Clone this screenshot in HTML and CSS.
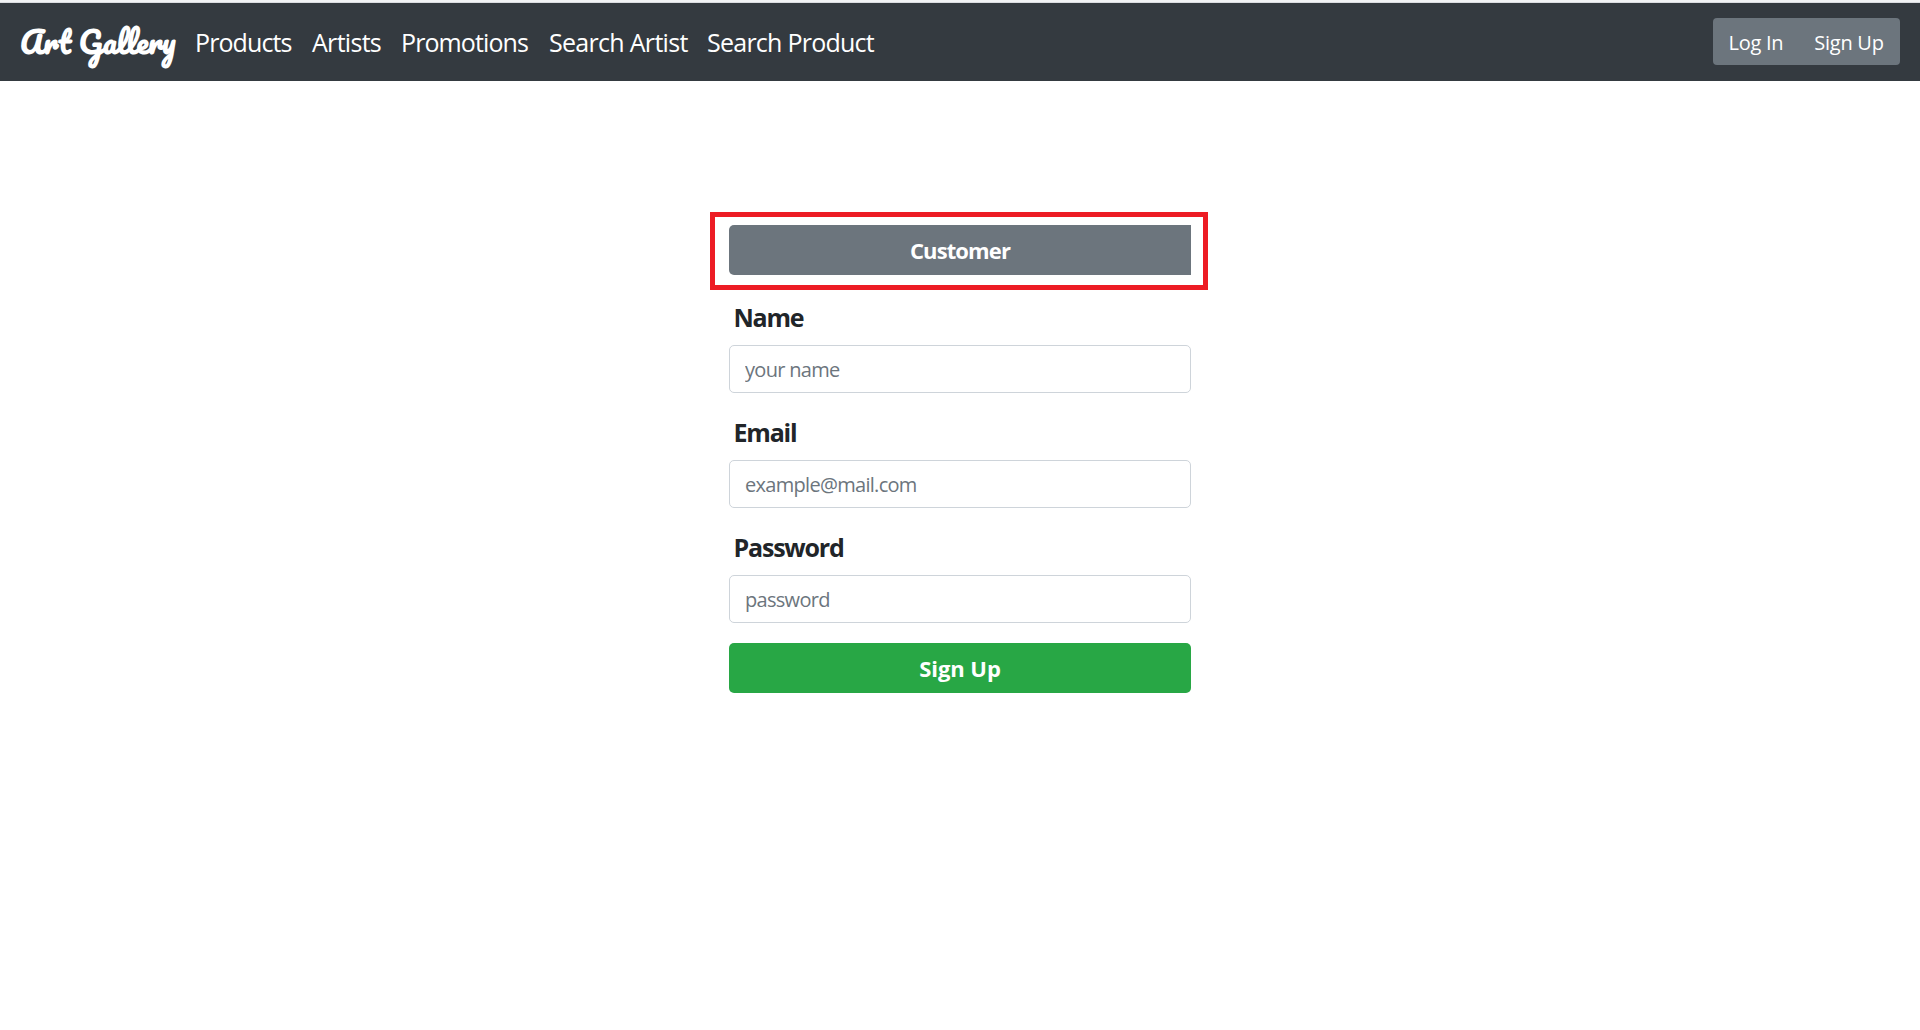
FILE: index.html
```html
<!DOCTYPE html>
<html lang="en">
<head>
<meta charset="utf-8">
<title>Art Gallery</title>
<link rel="stylesheet" href="styles.css">
</head>
<body>
<nav class="navbar">
  <a class="brand">Art Gallery</a>
  <div class="links">
    <a class="link products">Products</a>
    <a class="link artists">Artists</a>
    <a class="link promotions">Promotions</a>
    <a class="link search-artist">Search Artist</a>
    <a class="link search-product">Search Product</a>
  </div>
  <div class="account">
    <button class="account-btn login">Log In</button>
    <button class="account-btn signup">Sign Up</button>
  </div>
</nav>
<main class="page">
  <form class="form">
    <div class="highlight">
      <button type="button" class="btn btn-role">Customer</button>
    </div>
    <div class="group">
      <label class="label" for="name">Name</label>
      <input class="input" id="name" type="text" placeholder="your name">
    </div>
    <div class="group">
      <label class="label" for="email">Email</label>
      <input class="input" id="email" type="email" placeholder="example@mail.com">
    </div>
    <div class="group">
      <label class="label" for="password">Password</label>
      <input class="input" id="password" type="password" placeholder="password">
    </div>
    <button type="button" class="btn btn-submit">Sign Up</button>
  </form>
</main>
</body>
</html>
```
FILE: styles.css
```css
* { box-sizing: border-box; }
body {
  margin: 0;
  background: #fff;
  color: #212529;
  font-family: "Open Sans", "Noto Sans", sans-serif;
  font-size: 20px;
  line-height: 1.5;
}
button, input { font: inherit; }
.navbar {
  display: flex;
  align-items: center;
  height: 81px;
  padding: 3px 20px 0;
  background: linear-gradient(#f1f3f5 2px, #dadce0 2px, #dadce0 3px, #343a40 3px);
  color: #fff;
}
.brand {
  width: 165px;
  font-family: "Pacifico", "Liberation Serif", cursive;
  font-weight: 700;
  font-size: 30px;
  line-height: 44px;
  white-space: nowrap;
}
.links { display: flex; flex: 1; padding: 2px 0 0 10px; }
.link {
  font-size: 25px;
  letter-spacing: -0.9px;
  white-space: nowrap;
}
.products { width: 117px; }
.artists { width: 89px; letter-spacing: -0.7px; }
.promotions { width: 148px; }
.search-artist { width: 158px; letter-spacing: -0.7px; }
.search-product { width: 172px; letter-spacing: -0.75px; }
.account {
  display: flex;
  width: 187px;
  height: 47px;
  margin-bottom: 1px;
  border-radius: 4px;
  background: #6c757d;
}
.account-btn {
  border: 0;
  padding: 2px 0 0;
  background: transparent;
  color: #fff;
  letter-spacing: -0.27px;
}
.login { width: 86px; }
.signup { width: 101px; padding-right: 1px; }
.page { display: flex; justify-content: center; padding: 131px 2px 0 0; }
.form { width: 498px; }
.highlight {
  width: 498px;
  height: 78px;
  margin-bottom: 8px;
  padding: 8px 12px 0 14px;
  border: 5px solid #ed1c24;
}
.btn {
  display: block;
  height: 50px;
  padding: 0;
  border: 0;
  border-radius: 5px;
  color: #fff;
  font-size: 22px;
  font-weight: 700;
}
.btn-role {
  width: 462px;
  border-radius: 5px 0 0 5px;
  background: #6c757d;
  letter-spacing: -0.9px;
}
.group { width: 462px; height: 115px; margin-left: 19px; }
.label {
  display: block;
  height: 47px;
  padding: 0 4.5px;
  font-size: 25px;
  font-weight: 700;
  line-height: 38px;
  letter-spacing: -1.2px;
}
.input {
  display: block;
  width: 100%;
  height: 48px;
  padding: 1px 15px 0;
  border: 1px solid #ced4da;
  border-radius: 5px;
  background: #fff;
  letter-spacing: -0.7px;
}
.input::placeholder { color: #6c757d; opacity: 1; }
.btn-submit {
  width: 462px;
  margin-left: 19px;
  background: #28a745;
  letter-spacing: -0.05px;
}
```
